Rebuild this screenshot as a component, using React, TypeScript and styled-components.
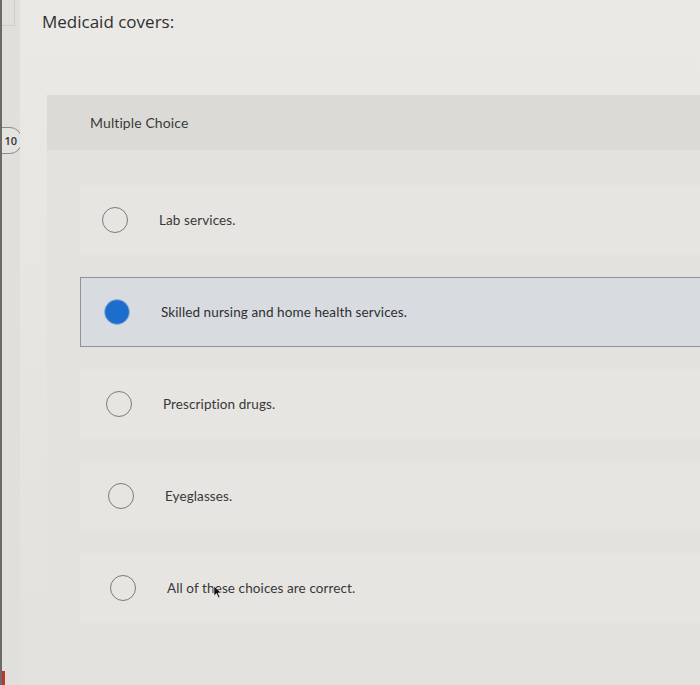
import styled, { createGlobalStyle } from "styled-components";

const GlobalStyle = createGlobalStyle`
  html, body {
    margin: 0;
    padding: 0;
    background: #e7e5e1;
  }
  body {
    font-family: "Lato", "Open Sans", sans-serif;
    color: #3a3a3a;
  }
`;

const Page = styled.div`
  display: flex;
  width: 700px;
  height: 685px;
  overflow: hidden;
  background: linear-gradient(180deg, #ebe9e6 0%, #e6e4e0 60%, #e3e1dd 100%);
`;

const Rail = styled.div`
  position: relative;
  width: 18px;
  flex: none;
  display: flex;
  flex-direction: column;
  border-left: 2px solid #6b6a68;
  background: #e1dfdb;
  overflow: hidden;
`;

const CornerBox = styled.div`
  width: 12px;
  height: 25px;
  border-right: 1px solid #cfcdc9;
  border-bottom: 1px solid #cfcdc9;
`;

const Badge = styled.div`
  margin: 101px 0 0 -14px;
  width: 28px;
  height: 25px;
  border: 1px solid #8b8a86;
  border-radius: 12px;
  background: #e4e3df;
  display: flex;
  align-items: center;
  justify-content: flex-end;
  padding-right: 4px;
  font-family: "Open Sans", sans-serif;
  font-size: 11px;
  font-weight: 600;
  color: #333;
`;

const RedMark = styled.div`
  margin-top: auto;
  margin-left: -2px;
  width: 5px;
  height: 14px;
  background: #c4332b;
`;

const Main = styled.div`
  flex: 1;
  display: flex;
  flex-direction: column;
  min-width: 0;
`;

const Title = styled.h1`
  margin: 11px 0 0 22px;
  font-family: "Open Sans", sans-serif;
  font-size: 17px;
  font-weight: 500;
  color: #2f2f2f;
  line-height: 22px;
`;

const Card = styled.div`
  margin: 62px -4px 0 27px;
  display: flex;
  flex-direction: column;
  background: #e4e2de;
  height: 555px;
`;

const CardHeader = styled.div`
  height: 55px;
  display: flex;
  align-items: center;
  padding-left: 43px;
  background: #dcdad6;
  font-size: 14px;
  color: #3b3b3b;
  letter-spacing: 0.1px;
`;

const OptionList = styled.div`
  display: flex;
  flex-direction: column;
  gap: 22px;
  padding: 35px 0 0 33px;
`;

const Option = styled.div<{ $selected?: boolean; $shift: number }>`
  position: relative;
  height: 70px;
  display: flex;
  align-items: center;
  gap: 31px;
  padding-left: ${(p) => 21 + p.$shift}px;
  box-sizing: border-box;
  background: ${(p) => (p.$selected ? "#d8dce0" : "#e7e5e1")};
  border: 1px solid ${(p) => (p.$selected ? "#8e9398" : "transparent")};
  border-right: none;
`;

const Radio = styled.span<{ $checked?: boolean }>`
  width: 26px;
  height: 26px;
  flex: none;
  border-radius: 50%;
  box-sizing: border-box;
  border: ${(p) => (p.$checked ? "1px solid #9fb6d4" : "1.5px solid #7b7b7b")};
  background: ${(p) => (p.$checked ? "#1d6dcc" : "transparent")};
`;

const Label = styled.span<{ $selected?: boolean }>`
  font-size: 13.5px;
  color: ${(p) => (p.$selected ? "#2f2f2f" : "#383838")};
  letter-spacing: 0.1px;
`;

const Cursor = styled.svg`
  position: absolute;
  left: 132px;
  top: 31px;
  width: 9px;
  height: 14px;
`;

const options = [
  "Lab services.",
  "Skilled nursing and home health services.",
  "Prescription drugs.",
  "Eyeglasses.",
  "All of these choices are correct.",
];

const App = () => {
  return (
    <>
      <GlobalStyle />
      <Page>
        <Rail>
          <CornerBox />
          <Badge>10</Badge>
          <RedMark />
        </Rail>
        <Main>
          <Title>Medicaid covers:</Title>
          <Card>
            <CardHeader>Multiple Choice</CardHeader>
            <OptionList>
              {options.map((text, i) => (
                <Option key={text} $selected={i === 1} $shift={i * 2}>
                  <Radio $checked={i === 1} />
                  <Label $selected={i === 1}>{text}</Label>
                  {i === 4 && (
                    <Cursor viewBox="0 0 9 14">
                      <path d="M1 1 L1 11 L3.5 8.6 L5.4 13 L7 12.3 L5.1 8 L8.4 8 Z" fill="#111" stroke="#fff" strokeWidth="0.6" />
                    </Cursor>
                  )}
                </Option>
              ))}
            </OptionList>
          </Card>
        </Main>
      </Page>
    </>
  );
};

export default App;
